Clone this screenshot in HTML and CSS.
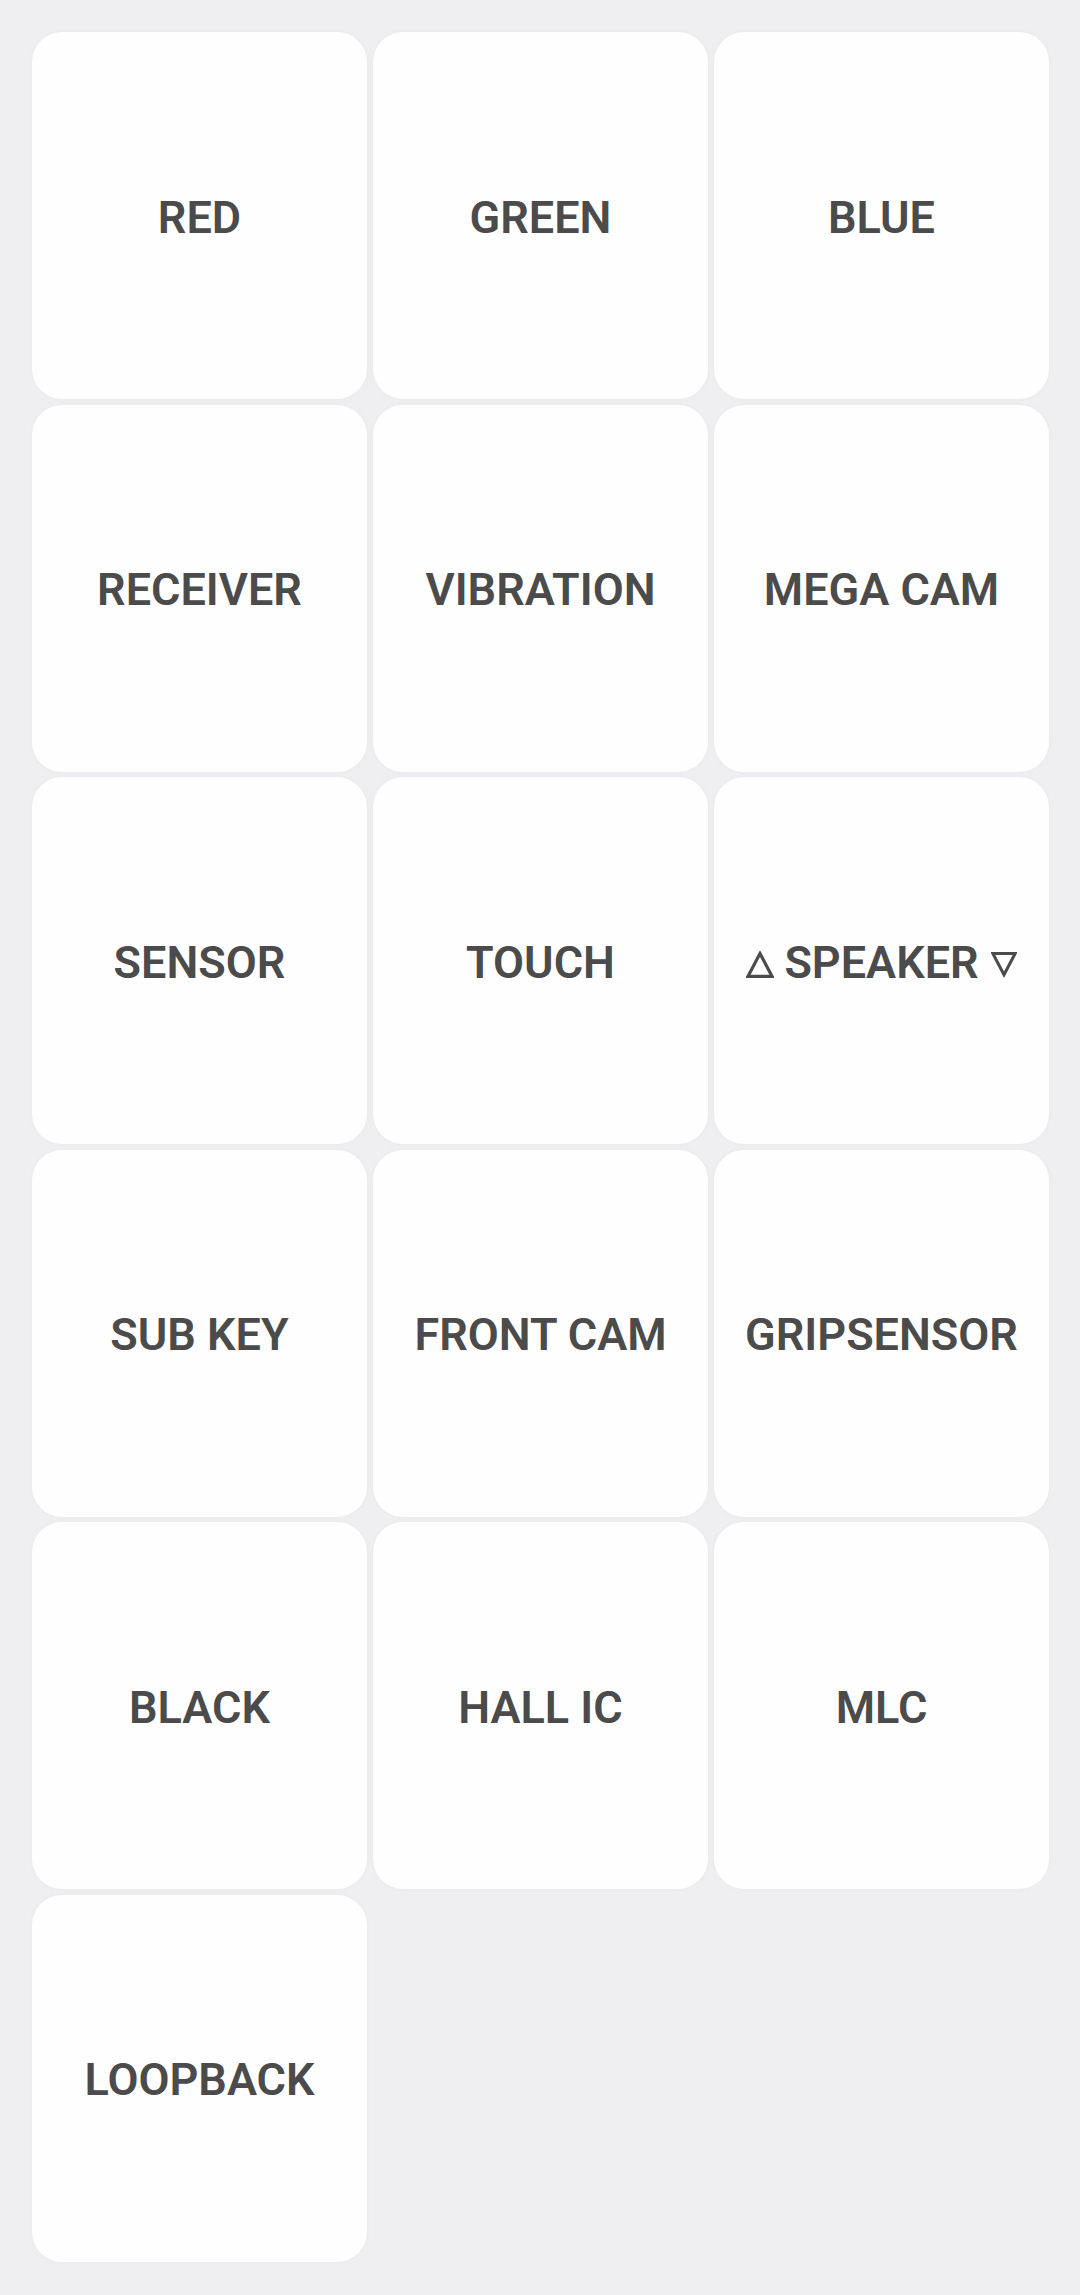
FILE: index.html
```html
<!DOCTYPE html>
<html lang="en">
<head>
  <meta charset="UTF-8" />
  <title>Test Menu</title>
  <link rel="stylesheet" href="styles.css">
</head>
<body>

<div class="test-grid">
  <div class="test-item">RED</div>
  <div class="test-item">GREEN</div>
  <div class="test-item">BLUE</div>
  <div class="test-item">RECEIVER</div>
  <div class="test-item">VIBRATION</div>
  <div class="test-item">MEGA CAM</div>
  <div class="test-item">SENSOR</div>
  <div class="test-item">TOUCH</div>
  <div class="test-item">
    <svg class="tri tri-up" viewBox="0 0 28 27"><path d="M14 2.5 L26 25.3 L2 25.3 Z" /></svg>
    SPEAKER
    <svg class="tri tri-down" viewBox="0 0 28 27"><path d="M2 1.7 L26 1.7 L14 24.5 Z" /></svg>
  </div>
  <div class="test-item">SUB KEY</div>
  <div class="test-item">FRONT CAM</div>
  <div class="test-item">GRIPSENSOR</div>
  <div class="test-item">BLACK</div>
  <div class="test-item">HALL IC</div>
  <div class="test-item">MLC</div>
  <div class="test-item">LOOPBACK</div>
</div>

</body>
</html>
```

FILE: styles.css
```css
html, body {
  margin: 0;
  background: #efeff1;
}
body {
  font-family: Roboto, "Noto Sans", sans-serif;
  height: 2295px;
  overflow: hidden;
}
.test-grid {
  display: grid;
  grid-template-columns: repeat(3, 335px);
  grid-auto-rows: 367px;
  column-gap: 6px;
  row-gap: 5.6px;
  padding: 32px 31px 0 32px;
}
.test-item {
  display: flex;
  align-items: center;
  justify-content: center;
  padding-top: 3px;
  background: #fefefe;
  border-radius: 30px;
  box-shadow: 0 0 4px 1px rgba(0, 0, 0, 0.025);
  color: #4b4b4b;
  font-size: 45px;
  font-weight: 600;
  white-space: nowrap;
}
.tri {
  width: 28px;
  height: 27px;
  margin-top: 4px;
  fill: none;
  stroke: #4b4b4b;
  stroke-width: 3.2;
  stroke-linejoin: miter;
}
.tri-up {
  margin-right: 10px;
}
.tri-down {
  margin-left: 12px;
  width: 26px;
}
```
